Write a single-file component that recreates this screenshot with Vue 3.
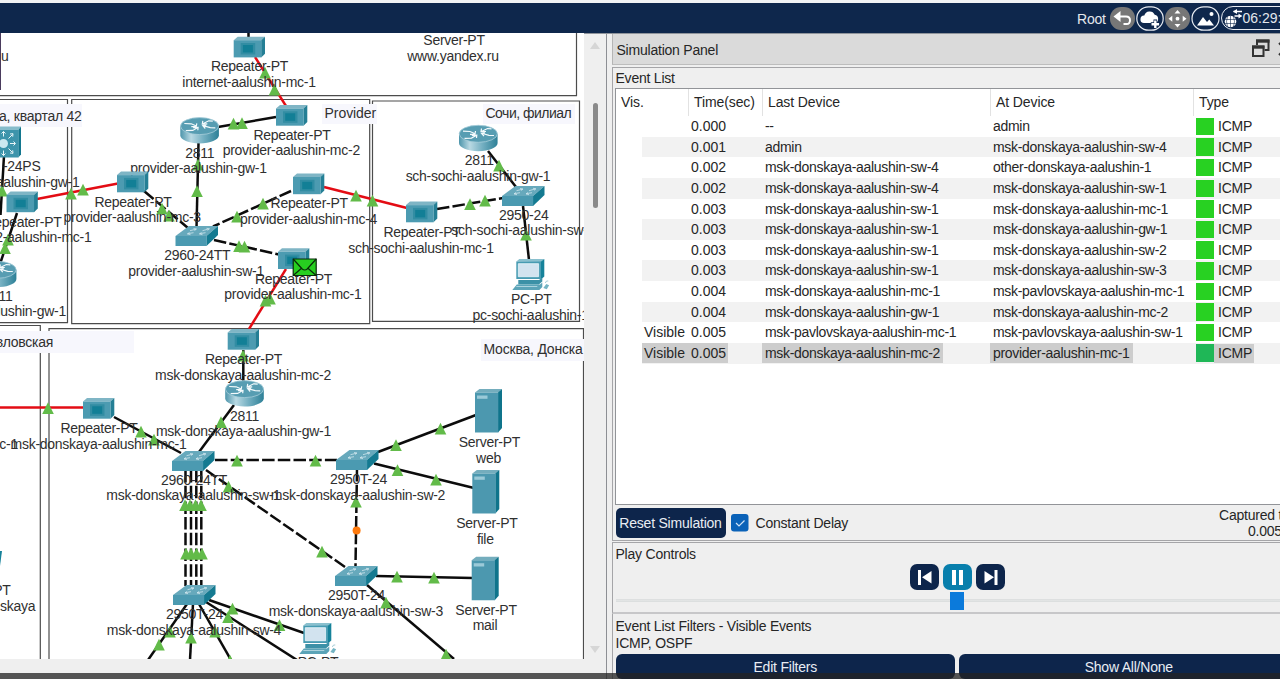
<script setup>
const events = [
  ['', '0.000', '--', 'admin'],
  ['', '0.001', 'admin', 'msk-donskaya-aalushin-sw-4'],
  ['', '0.002', 'msk-donskaya-aalushin-sw-4', 'other-donskaya-aalushin-1'],
  ['', '0.002', 'msk-donskaya-aalushin-sw-4', 'msk-donskaya-aalushin-sw-1'],
  ['', '0.003', 'msk-donskaya-aalushin-sw-1', 'msk-donskaya-aalushin-mc-1'],
  ['', '0.003', 'msk-donskaya-aalushin-sw-1', 'msk-donskaya-aalushin-gw-1'],
  ['', '0.003', 'msk-donskaya-aalushin-sw-1', 'msk-donskaya-aalushin-sw-2'],
  ['', '0.003', 'msk-donskaya-aalushin-sw-1', 'msk-donskaya-aalushin-sw-3'],
  ['', '0.004', 'msk-donskaya-aalushin-mc-1', 'msk-pavlovskaya-aalushin-mc-1'],
  ['', '0.004', 'msk-donskaya-aalushin-gw-1', 'msk-donskaya-aalushin-mc-2'],
  ['Visible', '0.005', 'msk-pavlovskaya-aalushin-mc-1', 'msk-pavlovskaya-aalushin-sw-1'],
  ['Visible', '0.005', 'msk-donskaya-aalushin-mc-2', 'provider-aalushin-mc-1'],
]

// kind, x1, y1, x2, y2
const links = [
  ['solid', 248.5, 30, 248.5, 38], ['fiber', 255, 57, 286, 106],
  ['solid', 276, 117, 218, 127], ['solid', 198.5, 143, 196.5, 228],
  ['fiber', 37, 199, 118, 183.5], ['dash', 144, 191, 188, 228],
  ['dash', 291, 191, 213, 226.5], ['dash', 214, 240, 279, 254.5],
  ['fiber', 324, 187, 407, 208], ['dash', 437, 209, 503, 198],
  ['solid', 488, 151, 516, 187], ['solid', 523, 206, 529, 260],
  ['fiber', 286, 269, 249, 329], ['solid', 243.3, 350, 243.3, 381],
  ['solid', 234, 405, 199, 452], ['fiber', 0, 407.5, 84, 407.5],
  ['solid', 114, 417, 181, 453], ['dash', 215, 460, 337, 460],
  ['dash', 206, 470, 345, 567], ['dash', 357, 469, 355.5, 566],
  ['solid', 378, 452, 476, 415], ['solid', 374, 463.5, 474, 488],
  ['solid', 376, 576, 473, 578], ['solid', 367, 585, 454, 659],
  ['dash', 185.5, 470, 185.5, 586], ['dash', 191, 470, 191, 586],
  ['dash', 196.3, 470, 196.3, 586], ['dash', 201.3, 470, 201.3, 586],
  ['solid', 187, 604, 148, 660], ['solid', 193, 604, 190, 660],
  ['solid', 199, 604, 231, 660], ['solid', 206, 602, 297, 660],
  ['solid', 209, 600, 304, 633], ['solid', 4, 156, 0.5, 215],
  ['solid', 17, 213, 0, 264],
]

const ups = [
  [265, 73], [274.5, 90], [233.5, 124], [242, 123.5], [198, 165], [197, 191.5], [71, 194], [83, 190],
  [162, 209], [169, 216], [263, 204], [237, 217], [239, 246.5], [244.5, 247], [356, 196], [372.5, 201],
  [470, 204.5], [485, 201], [499, 166], [526, 235], [265.5, 301], [270, 299], [243, 356], [48, 408.5],
  [221, 422.5], [141, 432], [154, 440], [237, 461], [315.5, 461], [228.5, 487], [322, 552], [356, 502],
  [440.5, 429], [396, 445.5], [397.5, 470.5], [436, 480], [397, 577], [434, 578], [386, 603], [446, 655],
  [185, 505.5], [190, 505.5], [195.5, 505.5], [201, 505.5], [186, 554], [191, 554], [196.5, 554], [202, 554],
  [159, 645], [170, 632], [191, 638], [215, 632], [230, 661], [228, 617.5], [232.5, 609], [279.5, 625.5],
  [2, 191], [5, 248.5], [8, 240],
]

// text, x, baseline, anchor, width
const labels = [
  ['Repeater-PT', 249.5, 71], ['internet-aalushin-mc-1', 249, 86.7],
  ['Server-PT', 454, 44.8], ['www.yandex.ru', 453, 60.3],
  ['u', 1, 61, 'start'], ['а, квартал 42', 81.5, 120.3, 'end'],
  ['Provider', 324.5, 118, 'start', 51.5], ['Сочи, филиал', 485.5, 118, 'start', 86],
  ['Repeater-PT', 292, 139.3], ['provider-aalushin-mc-2', 291.3, 155],
  ['2811', 199.7, 157.5], ['provider-aalushin-gw-1', 198.5, 172.7],
  ['-24PS', 40.5, 170.8, 'end'], ['aalushin-gw-1', 79.5, 186.3, 'end'],
  ['Repeater-PT', 133, 206.4], ['provider-aalushin-mc-3', 132.2, 221.8],
  ['Repeater-PT', 309.2, 208], ['provider-aalushin-mc-4', 308.5, 223.6],
  ['2811', 479.3, 165], ['sch-sochi-aalushin-gw-1', 478, 180.6],
  ['2950-24', 523.7, 219.4], ['sch-sochi-aalushin-sw-1', 451.2, 234.7, 'start'],
  ['Repeater-PT', 422, 236.8], ['sch-sochi-aalushin-mc-1', 421, 252.4],
  ['PC-PT', 531.3, 303.8], ['pc-sochi-aalushin-1', 472.5, 319.4, 'start'],
  ['Repeater-PT', 61.5, 226.7, 'end'], ['2-aalushin-mc-1', 91.5, 242, 'end'],
  ['2811', 12.5, 300.3, 'end'], ['alushin-gw-1', 66, 315.8, 'end'],
  ['2960-24TT', 197.3, 260], ['provider-aalushin-sw-1', 196.2, 275.6],
  ['Repeater-PT', 293.5, 283.4], ['provider-aalushin-mc-1', 292.9, 299],
  ['авловская', 53, 347, 'end'], ['Москва, Донска', 483.5, 353.8, 'start', 99],
  ['Repeater-PT', 243.5, 364], ['msk-donskaya-aalushin-mc-2', 243, 379.6],
  ['2811', 244.5, 420.4], ['msk-donskaya-aalushin-gw-1', 243.5, 435.6],
  ['Repeater-PT', 99, 433], ['msk-donskaya-aalushin-mc-1', 98.5, 448.5], ['c-1', 18, 448.5, 'end'],
  ['2960-24TT', 194, 484.7], ['msk-donskaya-aalushin-sw-1', 193.5, 500],
  ['2950T-24', 358.5, 483.8], ['msk-donskaya-aalushin-sw-2', 358, 499.4],
  ['Server-PT', 489.4, 446.8], ['web', 488.5, 462.2],
  ['Server-PT', 486.9, 527.8], ['file', 485.3, 543.2],
  ['Server-PT', 486, 614.6], ['mail', 485, 630],
  ['2950T-24', 356.5, 599.7], ['msk-donskaya-aalushin-sw-3', 355.8, 615.4],
  ['2950T-24', 194.5, 619], ['msk-donskaya-aalushin-sw-4', 194, 634.4],
  ['PT', 10.5, 594.8, 'end'], ['skaya', 35.3, 611, 'end'], ['PC-PT', 318, 667],
]

const repeaters = [[233.7, 36.7], [276, 105], [117, 171.6], [293, 173.5], [6.5, 191.5], [406, 201.6], [278, 248.3], [227.7, 329], [83, 398]]
const routers = [[180.3, 117.3], [459, 125], [225.2, 380.3], [-22.2, 261]]
const switches = [[175.5, 226], [502, 186], [172, 451], [336, 450], [335, 566], [173, 585]]
const servers = [[475, 389], [472.3, 470], [471.7, 556.7]]
const pcs = [[512.3, 259], [299.3, 623]]
</script>

<template>
  <div class="app">
    <header class="topbar">
      <span class="root">Root</span>
      <svg class="tool" width="27" height="25" viewBox="0 0 27 25">
        <rect x="1" y="1" width="25" height="23" rx="11" fill="#777" />
        <path d="M10 10.500H17q4 0 4 3.800T17.500 18h-3" fill="none" stroke="#fff" stroke-width="2" />
        <path d="M4.500 10.500l7-5.500v11z" fill="#fff" />
      </svg>
      <svg class="tool" width="28" height="25" viewBox="0 0 28 25">
        <rect x=".8" y=".8" width="26.400" height="23.400" rx="11.700" fill="none" stroke="#e8ecf2" stroke-width="1.200" />
        <path d="M8 17a3.700 3.700 0 0 1 .3-7.400 5.500 5.500 0 0 1 10.400-.8 4.200 4.200 0 0 1 .3 8.200z" fill="#fff" />
        <path d="M19.300 13.500v8.500M14.800 18h9" stroke="#0e274c" stroke-width="3.600" />
        <path d="M19.300 14.500v7.500M15.500 18.200h7.600" stroke="#fff" stroke-width="2.400" />
      </svg>
      <svg class="tool" width="27" height="25" viewBox="0 0 27 25">
        <rect x="1" y="1" width="25" height="23" rx="11" fill="#777" />
        <path d="M13.500 4l3 3.500h-6zM13.500 21.500l3-3.500h-6zM4.500 12.700l3.800-3v6zM22.500 12.700l-3.800-3v6z" fill="#fff" />
        <circle cx="13.500" cy="12.700" r="1.900" fill="#fff" />
      </svg>
      <svg class="tool" width="29" height="25" viewBox="0 0 29 25">
        <rect x="1" y=".8" width="27" height="23.400" rx="11.700" fill="none" stroke="#e8ecf2" stroke-width="1.200" />
        <path d="M6 19.500l6-8.500 4 5 2.300-2.500 4.700 6z" fill="#fff" />
        <circle cx="20.500" cy="8" r="2" fill="#fff" />
      </svg>
      <div class="clock">
        <svg width="22" height="23" viewBox="0 0 22 23">
          <circle cx="8.500" cy="14.500" r="5.800" fill="#fff" />
          <path d="M3 12.500h11M3 16.500h11M8.500 8.500v12M5.500 9.500q-2 5 0 10M11.500 9.500q2 5 0 10" stroke="#0e274c" stroke-width=".6" fill="none" />
          <path d="M11.500 4.500h8.500M12.500 9h7" stroke="#fff" stroke-width="1.700" />
          <path d="M15 2v5l-4-2.500zM16.500 6.500v5l3.500-2.500z" fill="#fff" />
        </svg>
        <span>06:29:</span>
      </div>
    </header>

    <main class="body">
      <section class="workspace">
        <svg class="map" width="584" height="626" viewBox="0 33 584 626">
          <defs>
            <linearGradient id="cyl" x1="0" x2="1">
              <stop offset="0" stop-color="#4d95ab" /><stop offset=".28" stop-color="#b9d9e3" />
              <stop offset=".6" stop-color="#75b0c2" /><stop offset="1" stop-color="#2d8097" />
            </linearGradient>
            <g id="repeater">
              <path d="M0 3.500L4 0h27.300l-3.600 3.500z" fill="#7fb5c5" />
              <path d="M27.500 3.500L31.300 0v17l-3.800 3.700z" fill="#247f95" />
              <path d="M0 3.500h27.600v17.200H0z" fill="#4c9bb1" />
              <path d="M7 6.300h14.500v11.500H7z" fill="#328da3" /><path d="M9.200 8.300h10v7.500h-10z" fill="#127f96" />
            </g>
            <g id="router">
              <path d="M0 9v9c0 4.500 8.600 8.200 19.300 8.200S38.600 22.500 38.600 18V9z" fill="url(#cyl)" />
              <ellipse cx="19.300" cy="8.800" rx="19.100" ry="8.500" fill="#579db2" stroke="#a6cdd9" stroke-width=".8" />
              <path d="M4 6.200l7 .3 4.500 2M16.500 6l-.5 3-5 .3M22.500 3.500l-.5 3.200 5-.2M22.500 6.500l6-3 4 .3M17.500 10.300l-5 2.800-7 .2M17.500 13l.3-2.900-5 .2M35 10.500l-5-.2-6.500-1.800M26 7.600l-3.500.8 2.500 2.800" fill="none" stroke="#f4fafc" stroke-width="1.200" />
            </g>
            <g id="switch">
              <path d="M0 10L13.500 0h29L31 10z" fill="#67a9bc" />
              <path d="M31 10L42.500 0v9L31 20z" fill="#147a91" />
              <path d="M0 10h31.200v10H0z" fill="#4b9ab1" />
              <path d="M14.500 4.700l6-1.500M18 2.500l3 .5-2 1.500M27 4.700l6-1.700M31 2.300l3 .5-2 1.500M12 7.700l6-1M15 8.700l-3-.8 2-1.400M24 7.700l6-1M27 8.700l-3-.8 2-1.400" fill="none" stroke="#cfe6ed" stroke-width=".8" />
            </g>
            <g id="server">
              <path d="M0 3.500L4.500 0H27l-3.500 3.500z" fill="#74adbd" />
              <path d="M23 3.500L27 0v39l-4 4.500z" fill="#0f748b" />
              <path d="M0 3.500h23.300v40H0z" fill="#4c98af" />
              <path d="M2 6.500h10.500v3.300H2z" fill="#9bcad8" />
            </g>
            <g id="pc">
              <path d="M4 2.500L7 0h25l-3.500 3z" fill="#8ac0ce" /><path d="M28 3l4-3v17.500L28 21z" fill="#16829a" />
              <path d="M4 2.500h24.500V20H4z" fill="#479bb2" /><path d="M6 4.700h20.300v13H6z" fill="#d2e3ef" stroke="#e9f5fa" stroke-width=".8" />
              <path d="M6 21h20.500l3.500-2v3.500l-3.500 3H6z" fill="#3c91a7" />
              <path d="M4.500 25.500h23.200l2.300-2v4.500L27 31H0z" fill="#5ba4b8" /><path d="M4 27.500h21" stroke="#acd3de" />
              <path d="M31 29l3-4 2.800 1.300-2.300 4z" fill="#74b4c4" /><path d="M33 24q1-3 3-2" stroke="#a5ccd6" fill="none" />
            </g>
          </defs>

          <g class="zones">
            <path d="M0 95.700H576.500V33" /><path d="M0 99.500H67.500V322.700H0" />
            <path d="M71.700 99.500H369.700V323.700H71.700z" /><path d="M372.500 101H579.500V321.300H372.500z" />
            <path d="M0 325.500H40.300V660" /><path d="M49 660V328.700H583.500V660" />
          </g>
          <g fill="#f7f7fd">
            <path d="M0 104h82v23H0zM322 104h55v20h-55zM483 104h92v20h-92zM0 331h134v22H0zM481 339h103v22H481z" />
          </g>

          <line v-for="(l, i) in links" :key="'l' + i" :class="l[0]" :x1="l[1]" :y1="l[2]" :x2="l[3]" :y2="l[4]" />
          <path v-for="(u, i) in ups" :key="'u' + i" :transform="`translate(${u[0]} ${u[1]})`" d="M0-6.300L5.800 5.600H-5.800z" fill="#62bb49" />
          <circle cx="356.600" cy="530.500" r="4" fill="#ff7a0d" />
          <text v-for="(t, i) in labels" :key="'t' + i" :x="t[1]" :y="t[2] + 0.3" :text-anchor="t[3] || 'middle'" :textLength="t[4]">{{ t[0] }}</text>

          <g transform="translate(-11 126.500)">
            <path d="M0 3.500L3 0h28.800l-2.500 3.500z" fill="#86bccb" /><path d="M29.300 3.500L32 0v28l-2.700 3z" fill="#13778f" />
            <path d="M0 3.500h29.500V31H0z" fill="#3d94ab" />
            <circle cx="14.500" cy="17" r="4.500" fill="#cce8f0" />
            <path d="M14.500 5v5M14.500 24v5M21 17h5M19.500 12l4-4M19.500 22l4 4M21 7.500l3-.3-.3 3M21 26.500l3 .3-.3-3M24.500 15l2 2-2 2M12.500 7l2-2 2 2M12.500 27l2 2 2-2" fill="none" stroke="#e9f5f8" stroke-width="1" />
          </g>
          <use v-for="(p, i) in repeaters" :key="'r' + i" href="#repeater" :x="p[0]" :y="p[1]" />
          <use v-for="(p, i) in routers" :key="'g' + i" href="#router" :x="p[0]" :y="p[1]" />
          <use v-for="(p, i) in switches" :key="'s' + i" href="#switch" :x="p[0]" :y="p[1]" />
          <use v-for="(p, i) in servers" :key="'v' + i" href="#server" :x="p[0]" :y="p[1]" />
          <use v-for="(p, i) in pcs" :key="'p' + i" href="#pc" :x="p[0]" :y="p[1]" />
          <path d="M0 551l2 0-2 15z" fill="#16829a" />

          <g transform="translate(292.700 258.500)" stroke="#0a2a0a" stroke-width="1.200">
            <path d="M.5.500h23v16.500H.5z" fill="#27cf20" />
            <path d="M.5.500L9.500 10.500q2.500 2 5 0L23.500.5M.5 17l8.300-7.200M23.500 17l-8.300-7.200" fill="none" />
          </g>
          <path d="M.4 33V90" stroke="#35244a" stroke-width="1" />
        </svg>
        <div class="vscroll">
          <i class="arrow up"></i><i class="thumb"></i><i class="arrow down"></i>
        </div>
      </section>

      <aside class="panel">
        <div class="title">
          <span>Simulation Panel</span>
          <svg width="30" height="24" viewBox="0 0 30 24">
            <path d="M7 8V3.500h11.500V13H14.500" fill="none" stroke="#333" stroke-width="2" /><path d="M6 2.500h13.500v3.200H6z" fill="#333" />
            <path d="M3 9.500h10.500V19H3z" fill="#ddd" stroke="#333" stroke-width="2" /><path d="M2 8.500h12.500v3.200H2z" fill="#333" />
            <path d="M29 6l3 3M29 18l3-3" fill="none" stroke="#333" stroke-width="2" />
          </svg>
        </div>
        <section class="events">
          <h2>Event List</h2>
          <div class="table">
            <div class="row head"><span>Vis.</span><span>Time(sec)</span><span>Last Device</span><span>At Device</span><span>Type</span></div>
            <div v-for="(e, i) in events" :key="i" class="row item" :class="{ odd: i % 2, selected: i === 11 }">
              <span class="vis"><b>{{ e[0] }}</b></span>
              <span class="time"><b>{{ e[1] }}</b></span>
              <span><b>{{ e[2] }}</b></span>
              <span><b>{{ e[3] }}</b></span>
              <span class="type"><i></i><b>ICMP</b></span>
            </div>
          </div>
          <div class="actions">
            <button class="reset">Reset Simulation</button>
            <svg class="check" width="18" height="18" viewBox="0 0 18 18"><rect width="17.500" height="17.500" rx="3" fill="#0a62b8" /><path d="M5 9l3 3 5.500-5.500" fill="none" stroke="#cfe2f5" stroke-width="1.200" /></svg>
            <span class="delay">Constant Delay</span>
            <div class="captured"><div>Captured to:</div><div class="secs">0.005 s</div></div>
          </div>
        </section>
        <section class="play">
          <h2>Play Controls</h2>
          <div class="controls">
            <button><svg width="29" height="26" viewBox="0 0 29 26"><path d="M8 6h3v15H8zM21.500 7v12.500L12 13.200z" fill="#fff" /></svg></button>
            <button class="pause"><svg width="29" height="26" viewBox="0 0 29 26"><path d="M9 6h4v15H9zM16 6h4v15h-4z" fill="#fff" /></svg></button>
            <button><svg width="29" height="26" viewBox="0 0 29 26"><path d="M18.500 6h3v15h-3zM8.500 7v12.500l9.500-6.300z" fill="#fff" /></svg></button>
          </div>
          <div class="slider"><i></i></div>
        </section>
        <section class="filters">
          <h2>Event List Filters - Visible Events</h2>
          <p>ICMP, OSPF</p>
          <div class="buttons"><button>Edit Filters</button><button>Show All/None</button></div>
        </section>
      </aside>
    </main>
    <div class="shade"></div>
  </div>
</template>

<style>
body { margin: 0; overflow: hidden; }
</style>

<style scoped>
* { box-sizing: border-box; }
.app { position: relative; width: 1280px; height: 679px; overflow: hidden; background: #efefef; color: #262626; font: 14px/16px "Liberation Sans", Arial, sans-serif; letter-spacing: -0.22px; white-space: nowrap; }
.topbar { height: 33px; border-top: 3px solid #f1f3f5; background: #0e274c; display: flex; align-items: center; padding-left: 1077px; color: #e3e7ed; overflow: hidden; }
.root { width: 32px; flex: none; padding-top: 1px; }
.tool { flex: none; display: block; }
.clock { flex: none; width: 80px; height: 24px; margin-left: 0.5px; border: 1.2px solid #e8ecf2; border-radius: 12px; display: flex; align-items: center; }
.clock svg { flex: none; }
.clock span { margin-left: -1px; letter-spacing: 0; }
.body { display: grid; grid-template-columns: 606px 674px; height: 646px; border-top: 1px solid #8f949b; }
.workspace { display: flex; align-items: flex-start; height: 646px; }
.map { display: block; background: #fff; margin-top: -1px; flex: none; }
.map text { font: 14px "Liberation Sans", Arial, sans-serif; letter-spacing: -0.27px; fill: #303030; }
.zones path { fill: none; stroke: #4c4c4c; stroke-width: 1.2; }
.solid, .dash { stroke: #0c0c0c; stroke-width: 2.5; }
.dash { stroke-dasharray: 12.5 3.2; }
.fiber { stroke: #e30c14; stroke-width: 2.4; }
.vscroll { width: 22px; height: 626px; display: flex; flex-direction: column; align-items: center; padding: 8px 0 7px; }
.arrow { border: 5px solid transparent; }
.arrow.up { border-top: 0; border-bottom: 7px solid #d6d6d6; }
.arrow.down { border-bottom: 0; border-top: 7px solid #d6d6d6; margin-top: auto; }
.thumb { width: 5px; height: 105px; margin-top: 54px; border-radius: 2.5px; background: #8a8a8a; }
.panel { border-left: 1px solid #8d8f94; padding-left: 5px; display: flex; flex-direction: column; min-width: 0; overflow: hidden; }
.title { height: 31px; flex: none; background: #dadada; border-left: 1px solid #b5b5b5; border-bottom: 1px solid #bdbdbd; display: flex; align-items: center; justify-content: space-between; padding-left: 3.5px; }
.title span { padding-top: 2px; }
.title svg { flex: none; }
h2, p { font: inherit; margin: 0; }
.events { height: 474px; flex: none; margin-top: 2px; border: 1px solid #a5a5a8; border-width: 1px 0 1px 1px; padding-left: 2px; }
.events h2 { height: 20px; padding: 2px 0 0 0.5px; }
.table { height: 417px; border: 1px solid #929498; border-right: 0; background: #fff; }
.row { display: grid; grid-template-columns: 72px 74px 228px 203px 100px; }
.head { height: 27px; letter-spacing: -0.1px; }
.head span { padding: 5px 0 0 5px; border-left: 1px solid #e2e2e2; }
.head span:first-child { border-left: 0; }
.item { height: 20.65px; line-height: 20.65px; letter-spacing: -0.3px; }
.item span { display: block; padding-left: 3px; }
.item.odd { background: linear-gradient(90deg, #fff 26px, #f2f2f2 26px); }
.item b { font-weight: normal; }
.item .vis { padding-left: 28px; letter-spacing: 0; }
.item .time { letter-spacing: 0; }
.item .type { display: flex; align-items: center; padding-left: 3px; letter-spacing: -0.2px; }
.type i { width: 18px; height: 17.5px; background: #28d122; margin-right: 4px; }
.selected .type i { background: #1fb757; height: 18px; }
.selected b { display: inline-block; height: 19.5px; line-height: 20.65px; background: #cdcdcd; vertical-align: top; }
.selected .vis { padding-left: 26px; }
.selected .vis b { padding-left: 2px; width: 46px; }
.selected .time { padding-left: 0; }
.selected .time b { padding: 0 3px; width: 40px; }
.selected span:nth-child(3), .selected span:nth-child(4) { padding-left: 0; }
.selected span:nth-child(3) b, .selected span:nth-child(4) b { padding: 0 3px; }
.selected .type i { margin: 0; }
.selected .type b { padding: 0 2px 0 4px; line-height: 19.5px; }
.actions { display: flex; align-items: flex-start; padding-top: 3px; }
button { font: inherit; letter-spacing: inherit; color: #e9edf3; background: #0d254b; border: 0; padding: 0; margin: 0; }
.reset { flex: none; width: 110px; height: 30px; border-radius: 5px; margin-left: 0.5px; }
.check { margin: 5.5px 0 0 5px; flex: none; }
.delay { margin: 7px 0 0 7px; width: 463px; flex: none; }
.captured { flex: none; line-height: 16px; margin-top: -1.5px; padding-left: 0.5px; }
.secs { padding-left: 29px; }
.play { height: 72px; flex: none; margin-top: 1px; border: 1px solid #a5a5a8; border-width: 1px 0 2px 1px; border-bottom-color: #c7c7c9; padding-left: 2.5px; }
.play h2 { height: 20.5px; padding-top: 3px; }
.controls { display: flex; gap: 3.5px; margin-left: 294.5px; height: 28px; }
.controls button { width: 29.3px; height: 26px; border-radius: 7px; }
.controls svg { display: block; }
.controls .pause { background: #087fac; }
.slider { height: 18px; display: flex; align-items: center; background: linear-gradient(transparent 7px, #d5d7d8 7px, #e5e7e7 8px, #d9dcdc 10px, transparent 10px); }
.slider i { width: 13.5px; height: 18px; margin-left: 334.5px; background: #0b7adb; }
.filters { border-left: 1px solid #a5a5a8; padding: 4px 0 0 2.5px; flex: 1; }
.filters p { padding-top: 1px; }
.buttons { display: flex; gap: 4px; padding: 3px 0 0 0; }
.buttons button { flex: none; width: 339.5px; height: 25px; border-radius: 6px; }
.shade { position: absolute; left: 0; right: 0; bottom: 0; height: 6px; background: rgba(35, 35, 35, 0.76); }
</style>
